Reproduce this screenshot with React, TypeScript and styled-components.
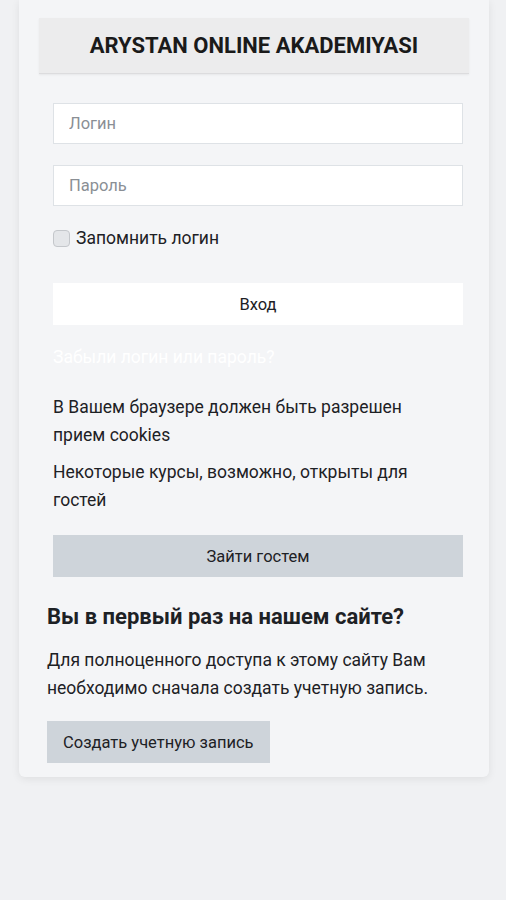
import React from "react";
import styled, { createGlobalStyle } from "styled-components";

const GlobalStyle = createGlobalStyle`
  html, body {
    margin: 0;
    padding: 0;
    background: #f0f1f3;
    font-family: Roboto, "Noto Sans", sans-serif;
    color: #1d2125;
  }
  * { box-sizing: border-box; }
`;

const Page = styled.div`
  min-height: 900px;
  padding: 0 17px 0 19px;
`;

const Card = styled.div`
  background: #f4f5f7;
  border-radius: 0 0 6px 6px;
  box-shadow: 0 2px 8px rgba(0, 0, 0, 0.08);
  padding: 18px 20px 14px;
`;

const Header = styled.div`
  background: #ececed;
  height: 56px;
  display: flex;
  align-items: center;
  justify-content: center;
  border-bottom: 1px solid #dcdcde;
  box-shadow: 0 1px 2px rgba(0, 0, 0, 0.06);
`;

const Title = styled.h1`
  margin: 0;
  font-size: 22px;
  font-weight: 700;
  color: #1a1a1a;
`;

const Form = styled.form`
  padding: 29px 6px 0 14px;
  display: flex;
  flex-direction: column;
`;

const Input = styled.input`
  height: 41px;
  border: 1px solid #dee2e6;
  background: #fff;
  padding: 0 15px;
  font-family: inherit;
  font-size: 16.5px;
  margin-bottom: 21px;
  &::placeholder {
    color: #8a8f95;
  }
`;

const CheckRow = styled.label`
  display: flex;
  align-items: center;
  gap: 6px;
  font-size: 17.5px;
  margin-top: -1px;
  height: 24px;
`;

const Box = styled.span`
  width: 17px;
  height: 17px;
  border-radius: 4px;
  border: 1px solid #c4c7cb;
  background: #e4e6e9;
`;

const Button = styled.button<{ $variant?: "light" | "grey"; $wide?: boolean }>`
  height: 42px;
  border: none;
  border-radius: 0;
  font-family: inherit;
  font-size: 16.5px;
  color: #1d2125;
  background: ${(p) => (p.$variant === "grey" ? "#ced4da" : "#ffffff")};
  width: ${(p) => (p.$wide ? "100%" : "auto")};
  padding: 0 16px;
  cursor: pointer;
`;

const Forgot = styled.a`
  display: block;
  color: #ffffff;
  font-size: 17.5px;
  margin: 22px 0 26px;
  text-decoration: none;
`;

const Text = styled.p`
  margin: 0 0 9px;
  max-width: 390px;
  font-size: 17.5px;
  line-height: 28px;
  color: #1d2125;
`;

const Section = styled.div`
  padding: 0 8px;
  margin-top: 26px;
`;

const Heading = styled.h2`
  margin: 0 0 15px;
  font-size: 22px;
  font-weight: 700;
  line-height: 28px;
`;

export default function App() {
  return (
    <>
      <GlobalStyle />
      <Page>
        <Card>
          <Header>
            <Title>ARYSTAN ONLINE AKADEMIYASI</Title>
          </Header>
          <Form onSubmit={(e) => e.preventDefault()}>
            <Input placeholder="Логин" />
            <Input placeholder="Пароль" type="password" />
            <CheckRow>
              <Box />
              Запомнить логин
            </CheckRow>
            <div style={{ height: 33 }} />
            <Button $wide>Вход</Button>
            <Forgot href="#">Забыли логин или пароль?</Forgot>
            <Text>В Вашем браузере должен быть разрешен прием cookies</Text>
            <Text>Некоторые курсы, возможно, открыты для гостей</Text>
            <div style={{ height: 12 }} />
            <Button $variant="grey" $wide>
              Зайти гостем
            </Button>
          </Form>
          <Section>
            <Heading>Вы в первый раз на нашем сайте?</Heading>
            <Text>
              Для полноценного доступа к этому сайту Вам необходимо сначала
              создать учетную запись.
            </Text>
            <div style={{ height: 10 }} />
            <Button $variant="grey">Создать учетную запись</Button>
          </Section>
        </Card>
      </Page>
    </>
  );
}
